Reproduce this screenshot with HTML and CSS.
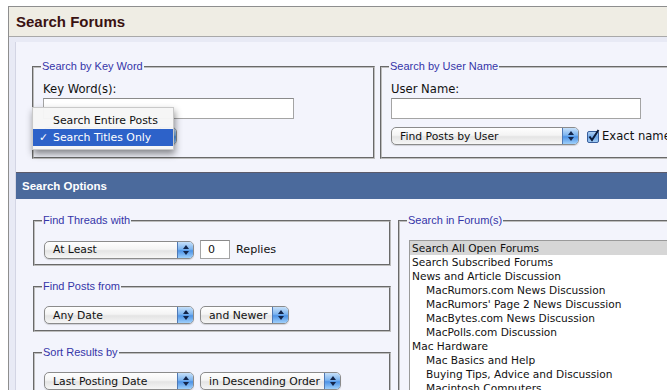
FILE: index.html
```html
<!DOCTYPE html>
<html lang="en">
<head>
    <meta charset="UTF-8">
    <title>Search Forums</title>
    <link rel="stylesheet" href="styles.css">
</head>
<body>
    <div class="frame">
        <div class="page-head">
            <h1>Search Forums</h1>
        </div>
        <div class="panel-wrap">
            <div class="panel">
                <div class="top-row">
                    <fieldset class="box kw-box">
                        <legend>Search by Key Word</legend>
                        <label class="field-label">Key Word(s):</label>
                        <div class="text-input kw-input"></div>
                        <div class="menu-anchor">
                            <div class="popup w-titles"><span class="popup-text">Search Titles Only</span><span class="popup-cap"></span></div>
                            <ul class="popup-menu">
                                <li>Search Entire Posts</li>
                                <li class="chosen"><span class="tick">&#10003;</span>Search Titles Only</li>
                            </ul>
                        </div>
                    </fieldset>
                    <fieldset class="box user-box">
                        <legend>Search by User Name</legend>
                        <label class="field-label">User Name:</label>
                        <div class="text-input user-input"></div>
                        <div class="inline-row">
                            <div class="popup w-user"><span class="popup-text">Find Posts by User</span><span class="popup-cap"></span></div>
                            <svg class="check" width="13" height="14" viewBox="0 0 13 14">
                                <defs>
                                    <linearGradient id="cb" x1="0" y1="0" x2="0" y2="1">
                                        <stop offset="0" stop-color="#b9d6f6"/>
                                        <stop offset="0.5" stop-color="#6fa6e6"/>
                                        <stop offset="1" stop-color="#a7cff5"/>
                                    </linearGradient>
                                </defs>
                                <rect x="0.5" y="2.5" width="11" height="11" rx="1.5" fill="url(#cb)" stroke="#3a5f9c"/>
                                <path d="M2.5 7.5 L5 11 L11.5 1" fill="none" stroke="#0d1b3a" stroke-width="2"/>
                            </svg>
                            <span class="check-text">Exact name</span>
                        </div>
                    </fieldset>
                </div>

                <div class="options-bar">Search Options</div>

                <div class="options">
                    <div class="left-col">
                        <fieldset class="box opt-box">
                            <legend>Find Threads with</legend>
                            <div class="inline-row">
                                <div class="popup w-main"><span class="popup-text">At Least</span><span class="popup-cap"></span></div>
                                <div class="text-input replies-input">0</div>
                                <span class="after-text">Replies</span>
                            </div>
                        </fieldset>
                        <fieldset class="box opt-box">
                            <legend>Find Posts from</legend>
                            <div class="inline-row">
                                <div class="popup w-main"><span class="popup-text">Any Date</span><span class="popup-cap"></span></div>
                                <div class="popup w-newer"><span class="popup-text">and Newer</span><span class="popup-cap"></span></div>
                            </div>
                        </fieldset>
                        <fieldset class="box opt-box">
                            <legend>Sort Results by</legend>
                            <div class="inline-row">
                                <div class="popup w-main"><span class="popup-text">Last Posting Date</span><span class="popup-cap"></span></div>
                                <div class="popup w-order"><span class="popup-text">in Descending Order</span><span class="popup-cap"></span></div>
                            </div>
                        </fieldset>
                    </div>
                    <fieldset class="box forum-box">
                        <legend>Search in Forum(s)</legend>
                        <ul class="forum-list">
                            <li class="picked">Search All Open Forums</li>
                            <li>Search Subscribed Forums</li>
                            <li>News and Article Discussion</li>
                            <li class="sub">MacRumors.com News Discussion</li>
                            <li class="sub">MacRumors' Page 2 News Discussion</li>
                            <li class="sub">MacBytes.com News Discussion</li>
                            <li class="sub">MacPolls.com Discussion</li>
                            <li>Mac Hardware</li>
                            <li class="sub">Mac Basics and Help</li>
                            <li class="sub">Buying Tips, Advice and Discussion</li>
                            <li class="sub">Macintosh Computers</li>
                            <li class="sub">PowerBook and iBook</li>
                        </ul>
                    </fieldset>
                </div>
            </div>
        </div>
    </div>
</body>
</html>
```

FILE: styles.css
```css
* {
    box-sizing: border-box;
}

html, body {
    height: 100%;
    overflow: hidden;
}

body {
    margin: 0;
    padding: 6px 0 0 8px;
    background: #ffffff;
    font-family: "DejaVu Sans", Verdana, sans-serif;
    color: #111;
}

.frame {
    width: 900px;
    height: 600px;
    border-left: 1px solid #8e8e8e;
    border-top: 1px solid #8e8e8e;
    background: #e8eaf5;
}

/* page title */
.page-head {
    height: 30px;
    background: #efede4;
    border-bottom: 1px solid #a9a9a9;
    padding-left: 7px;
    display: flex;
    align-items: center;
}

.page-head h1 {
    margin: 0;
    font-family: "Liberation Sans", Arial, sans-serif;
    font-size: 15px;
    font-weight: bold;
    color: #3a1212;
}

.panel-wrap {
    padding: 5px 0 0 6px;
}

.panel {
    background: #f3f4fc;
    border-left: 1px solid #d3d5e4;
    height: 600px;
}

/* fieldsets */
.box {
    margin: 0;
    padding: 0 9px;
    border: 2px groove #bdbdbd;
}

.box legend {
    padding: 0 1px;
    margin-left: -2px;
    font-family: "Liberation Sans", Arial, sans-serif;
    font-size: 11px;
    line-height: 13px;
    color: #3535a8;
}

.top-row {
    display: flex;
    gap: 5px;
    padding: 18px 0 0 16px;
}

.kw-box {
    width: 343px;
    height: 99px;
}

.user-box {
    width: 320px;
    height: 99px;
}

.field-label {
    display: block;
    margin-top: 9px;
    font-size: 11.6px;
    line-height: 14px;
}

.text-input {
    height: 21px;
    margin-top: 2px;
    background: #fff;
    border: 1px solid #a4a4a4;
    border-top-color: #8a8a8a;
}

.kw-input {
    width: 251px;
}

.user-input {
    width: 250px;
}

.inline-row {
    display: flex;
    align-items: center;
    margin-top: 8px;
}

/* aqua style popup buttons */
.popup {
    position: relative;
    height: 18px;
    border: 1px solid #8b8b8b;
    border-radius: 5px;
    background: linear-gradient(#fefefe, #f4f4f4 45%, #e4e4e4 55%, #f6f6f6);
    box-shadow: 0 1px 1px rgba(0, 0, 0, 0.15);
    display: flex;
    align-items: center;
    overflow: hidden;
}

.popup-text {
    flex: 1;
    padding-left: 8px;
    font-size: 10.8px;
    white-space: nowrap;
}

.popup-cap {
    position: relative;
    width: 16px;
    height: 100%;
    border-left: 1px solid #4f79b5;
    background: linear-gradient(#c6e0fa, #7cb4ef 45%, #4d93e6 55%, #9fd0fb);
}

.popup-cap::before,
.popup-cap::after {
    content: "";
    position: absolute;
    left: 5px;
    border-left: 3px solid transparent;
    border-right: 3px solid transparent;
}

.popup-cap::before {
    top: 3px;
    border-bottom: 4px solid #13254a;
}

.popup-cap::after {
    bottom: 3px;
    border-top: 4px solid #13254a;
}

.w-titles { width: 134px; }
.w-user { width: 188px; }
.w-main { width: 150px; }
.w-newer { width: 89px; }
.w-order { width: 141px; }

.menu-anchor {
    position: relative;
    margin-top: 8px;
    width: 134px;
}

.popup-menu {
    position: absolute;
    left: -11px;
    top: -20px;
    width: 142px;
    margin: 0;
    padding: 4px 0 3px;
    list-style: none;
    background: rgba(246, 246, 246, 0.96);
    border: 1px solid #c9c9c9;
    box-shadow: 1px 4px 7px rgba(0, 0, 0, 0.45);
    font-size: 10.9px;
}

.popup-menu li {
    position: relative;
    height: 17px;
    line-height: 17px;
    padding-left: 20px;
    white-space: nowrap;
}

.popup-menu li.chosen {
    background: #2d62c9;
    color: #fff;
}

.tick {
    position: absolute;
    left: 6px;
    top: 0;
}

.check {
    margin-left: 8px;
    flex-shrink: 0;
}

.check-text {
    margin-left: 2px;
    font-size: 11.6px;
}

/* options bar */
.options-bar {
    margin-top: 13px;
    height: 27px;
    background: #4b6a9c;
    border-top: 1px solid #5b5b6b;
    padding-left: 6px;
    display: flex;
    align-items: center;
    font-family: "Liberation Sans", Arial, sans-serif;
    font-size: 11.5px;
    font-weight: bold;
    color: #fff;
}

.options {
    display: flex;
    gap: 7px;
    padding: 15px 0 0 17px;
}

.left-col {
    display: flex;
    flex-direction: column;
    gap: 14px;
    width: 358px;
}

.opt-box {
    height: 52px;
}

.opt-box .inline-row {
    margin-top: 13px;
}

.replies-input {
    width: 30px;
    height: 19px;
    margin: 0 0 0 6px;
    padding-left: 7px;
    font-size: 11px;
    line-height: 17px;
}

.after-text {
    margin-left: 6px;
    font-size: 11.2px;
}

.w-newer, .w-order {
    margin-left: 6px;
}

.forum-box {
    width: 300px;
    height: 200px;
}

.forum-list {
    margin: 13px 0 0 0;
    padding: 0;
    list-style: none;
    width: 290px;
    background: #fff;
    border: 1px solid #9a9a9a;
    font-size: 10.6px;
}

.forum-list li {
    height: 14px;
    line-height: 14px;
    padding-left: 2px;
    white-space: nowrap;
}

.forum-list li.sub {
    padding-left: 16px;
}

.forum-list li.picked {
    background: #d6d6d6;
}
```
